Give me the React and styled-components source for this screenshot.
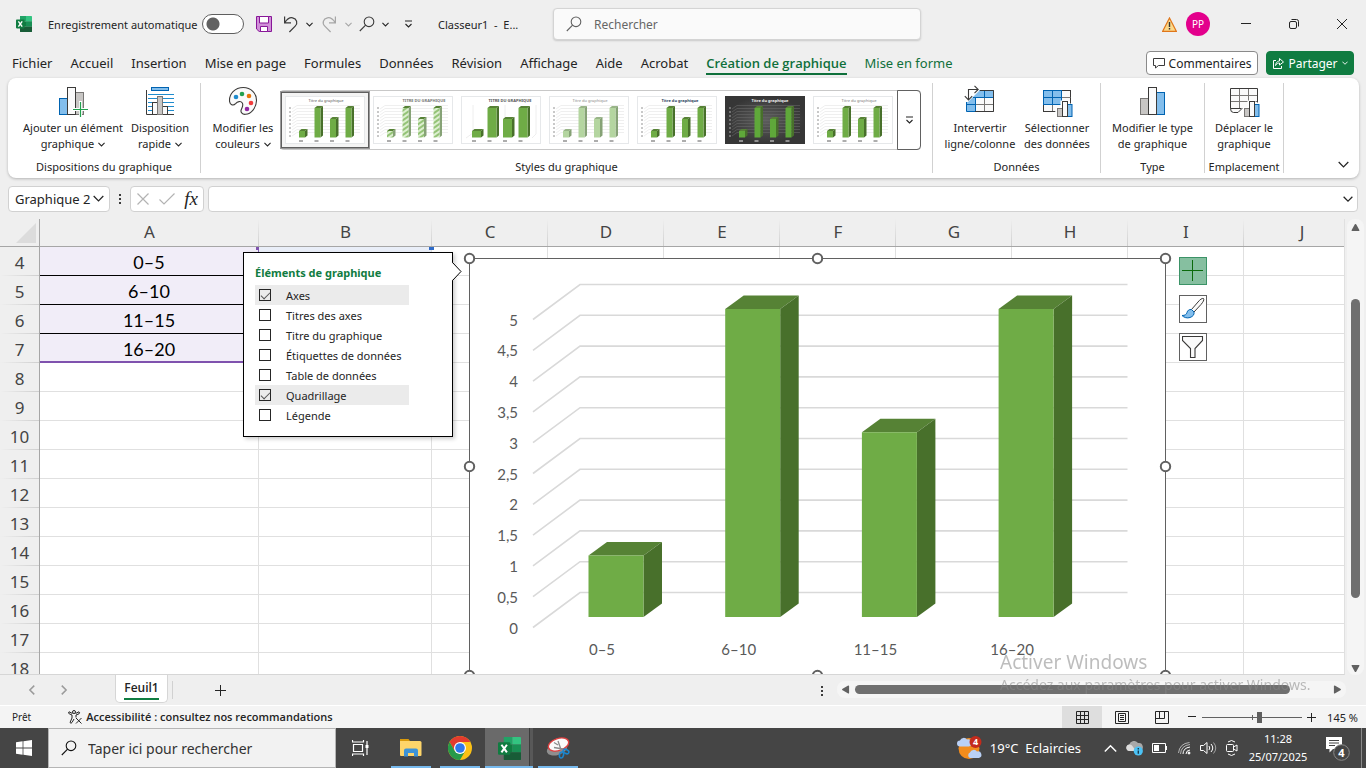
import React from "react";
import styled, { createGlobalStyle, css } from "styled-components";

const GlobalStyle = createGlobalStyle`
  *, *::before, *::after { box-sizing: border-box; }
  body { margin: 0; font-family: "Noto Sans", "Open Sans", sans-serif; font-size: 12px; color: #242424; background: #efefef; overflow: hidden; }
  button, input { font: inherit; color: inherit; margin: 0; }
  button { border: 0; background: none; padding: 0; cursor: pointer; }
  svg { display: block; flex: none; }
`;

const Window = styled.div`
  display: flex;
  flex-direction: column;
  height: 100vh;
  background: #efefef;
`;

const IconButton = styled.button`
  display: flex;
  align-items: center;
  justify-content: center;
  flex: none;
  width: ${(p) => p.$w || 24}px;
  height: 24px;
`;

/* ---------- title bar ---------- */

const TitleBar = styled.header`
  display: flex;
  align-items: center;
  height: 48px;
  flex: none;
  padding-left: 16px;
`;

const TitleLeft = styled.div`
  display: flex;
  align-items: center;
  width: 537px;
  flex: none;
  font-size: 11px;
`;

const AutoSave = styled.label`
  display: flex;
  align-items: center;
  justify-content: space-between;
  width: 196px;
  margin: 0 8px 0 16px;
  white-space: nowrap;
`;

const Toggle = styled.input`
  appearance: none;
  width: 42px;
  height: 20px;
  border: 1px solid #5f5f5f;
  border-radius: 10px;
  background: radial-gradient(circle 7px at 10px 9px, #616161 6px, #fff 7px);
`;

const DocName = styled.span`
  margin-left: 11px;
  white-space: pre;
`;

const SearchBox = styled.label`
  display: flex;
  align-items: center;
  gap: 12px;
  flex: 0 1 368px;
  height: 32px;
  padding: 0 12px;
  background: #fafafa;
  border: 1px solid #d4d4d4;
  border-radius: 4px;
  box-shadow: 0 1px 2px rgba(0, 0, 0, 0.16);
`;

const SearchInput = styled.input`
  flex: 1;
  min-width: 0;
  border: 0;
  outline: 0;
  background: none;
  padding: 0;
  font-size: ${(p) => p.$size || 12}px;
  &::placeholder { color: ${(p) => p.$color || "#666"}; opacity: 1; }
`;

const TitleRight = styled.div`
  display: flex;
  align-items: center;
  margin-left: auto;
`;

const Avatar = styled.button`
  width: 24px;
  height: 24px;
  margin: 0 12px 0 9px;
  border-radius: 50%;
  background: #e3008c;
  color: #fff;
  font-size: 10px;
`;

/* ---------- ribbon tabs ---------- */

const TabRow = styled.nav`
  display: flex;
  align-items: center;
  justify-content: space-between;
  height: 30px;
  flex: none;
  padding: 0 12px;
`;

const TabList = styled.div`
  display: flex;
  gap: 18px;
  white-space: nowrap;
  font-size: 13px;
`;

const Tab = styled.button`
  height: 24px;
  line-height: 20px;
  border-top: 2px solid transparent;
  border-bottom: 2px solid transparent;
  ${(p) => p.$green && css`color: #0f703b;`}
  ${(p) => p.$active && css`font-family: "Open Sans", sans-serif; font-weight: 600; border-bottom-color: #0f703b;`}
`;

const TabActions = styled.div`
  display: flex;
  gap: 8px;
`;

const ActionButton = styled.button`
  display: flex;
  align-items: center;
  justify-content: center;
  gap: 4px;
  width: ${(p) => (p.$primary ? 88 : 112)}px;
  height: 24px;
  border-radius: 4px;
  border: 1px solid ${(p) => (p.$primary ? "#107c41" : "#8a8a8a")};
  background: ${(p) => (p.$primary ? "#107c41" : "#fff")};
  color: ${(p) => (p.$primary ? "#fff" : "#242424")};
`;

/* ---------- ribbon ---------- */

const Ribbon = styled.section`
  display: flex;
  height: 100px;
  flex: none;
  margin: 0 7px 0 8px;
  padding: 5px 0;
  background: #fff;
  border-radius: 8px;
  box-shadow: 0 1px 3px rgba(0, 0, 0, 0.25);
  font-size: 11px;
`;

const Group = styled.div`
  display: flex;
  flex-direction: column;
  justify-content: space-between;
  width: ${(p) => p.$w}px;
  flex: none;
  border-right: 1px solid #d1d1d1;
`;

const GroupBody = styled.div`
  display: flex;
  justify-content: ${(p) => p.$justify || "center"};
  height: 74px;
  padding: 0 ${(p) => p.$pad || 0}px;
`;

const GroupLabel = styled.div`
  height: 14px;
  line-height: 16px;
  text-align: center;
  white-space: nowrap;
`;

const BigButton = styled.button`
  display: flex;
  flex-direction: column;
  align-items: center;
  width: ${(p) => p.$w}px;
  flex: none;
  padding-top: 2px;
  line-height: 16px;
  white-space: nowrap;
  svg.main { margin-bottom: 3px; }
`;

const LabelLine = styled.span`
  display: flex;
  align-items: center;
  gap: 4px;
`;

const Gallery = styled.div`
  display: flex;
  height: 60px;
  margin: 7px 0 0 3px;
  border: 1px solid #c8c8c8;
  border-right: 0;
  border-radius: 4px;
`;

const Thumb = styled.button`
  width: 88px;
  height: 56px;
  margin-top: 1px;
  display: grid;
  place-items: center;
  border: ${(p) => (p.$selected ? "1px solid #5f5f5f" : "0")};
  outline: ${(p) => (p.$selected ? "1px solid #9a9a9a" : "0")};
  background: ${(p) => (p.$selected ? "#f4f4f4" : "transparent")};
`;

const GalleryMore = styled.button`
  display: grid;
  place-items: center;
  width: 24px;
  height: 60px;
  margin: -1px 0 0 0;
  border: 1px solid #616161;
  border-radius: 0 4px 4px 0;
`;

const RibbonEnd = styled.div`
  display: flex;
  flex: 1;
  align-items: flex-end;
  justify-content: flex-end;
  padding-right: 4px;
  margin-bottom: -3px;
`;

/* ---------- formula bar ---------- */

const FormulaRow = styled.div`
  display: flex;
  align-items: center;
  height: 41px;
  flex: none;
  padding: 0 8px;
`;

const NameBox = styled.button`
  display: flex;
  align-items: center;
  justify-content: space-between;
  width: 102px;
  height: 26px;
  padding: 0 5px 0 6px;
  background: #fff;
  border: 1px solid #d1d1d1;
  border-radius: 4px;
  font-size: 13px;
  white-space: nowrap;
`;

const FormulaTools = styled.div`
  display: flex;
  align-items: center;
  width: 74px;
  height: 26px;
  background: #fff;
  border: 1px solid #d1d1d1;
  border-radius: 4px;
`;

const Fx = styled.span`
  font: italic 19px/22px "Liberation Serif", serif;
  color: #242424;
`;

const FormulaField = styled.label`
  display: flex;
  align-items: center;
  flex: 1;
  height: 26px;
  margin-left: 4px;
  padding: 0 4px;
  background: #fff;
  border: 1px solid #d1d1d1;
  border-radius: 4px;
`;

/* ---------- worksheet ---------- */

const Workspace = styled.main`
  display: flex;
  flex: 1;
  min-height: 0;
`;

const SheetArea = styled.div`
  position: relative;
  flex: 1;
  min-width: 0;
  overflow: hidden;
  border-right: 1px solid #e0e0e0;
  border-bottom: 1px solid #d6d6d6;
`;

const Grid = styled.table`
  table-layout: fixed;
  width: 1360px;
  border-spacing: 0;
  background: #fff;
`;

const ColHead = styled.th`
  height: 28px;
  padding: 0 0 2px;
  font-size: 17px;
  font-weight: 400;
  line-height: 24px;
  color: #444;
  border-bottom: 1px solid #a6a6a6;
  background: linear-gradient(#efefef, #cfcfcf) right / 1px 100% no-repeat #efefef;
`;

const Corner = styled.th`
  padding: 0;
  background: #efefef;
  border-right: 1px solid #a6a6a6;
  border-bottom: 1px solid #a6a6a6;
`;

const RowHead = styled.th`
  height: 29px;
  padding: 2px 0 0;
  font-size: 17px;
  font-weight: 400;
  line-height: 24px;
  color: #444;
  background: linear-gradient(90deg, #efefef, #cfcfcf) bottom / 100% 1px no-repeat #efefef;
  border-right: 1px solid #a6a6a6;
`;

const Cell = styled.td`
  position: relative;
  padding: 2px 0 0;
  text-align: center;
  border-right: 1px solid #e0e0e0;
  border-bottom: 1px solid #e0e0e0;
  font: 18px/24px Lato, sans-serif;
  color: #000;
  ${(p) => p.$range && css`background: #f1edf8; border-color: #000; border-right-color: #8764b8;`}
  ${(p) => p.$last && css`border-bottom: 2px solid #7f52ae;`}
  ${(p) => p.$mark && css`
    &::before {
      content: "";
      position: absolute;
      top: 0;
      right: -3px;
      width: 5px;
      height: 3px;
      background: ${p.$mark};
    }
  `}
  ${(p) => p.$series && css`background: #e9eef8;`}
`;

const ChartObject = styled.figure`
  position: absolute;
  left: 463px;
  top: 33px;
  margin: 0;
`;

const ChartTools = styled.div`
  position: absolute;
  left: 1179px;
  top: 38px;
  display: flex;
  flex-direction: column;
  gap: 10px;
`;

const ChartTool = styled.button`
  display: grid;
  place-items: center;
  width: 28px;
  height: 28px;
  border: 1px solid ${(p) => (p.$active ? "#3c9367" : "#616161")};
  background: ${(p) => (p.$active ? "#86bfa0" : "#fff")};
`;

const Popup = styled.section`
  position: absolute;
  left: 243px;
  top: 33px;
  width: 210px;
  height: 185px;
  padding: 11px 10px 0 11px;
  background: #fff;
  border: 1px solid #000;
  box-shadow: 2px 2px 4px rgba(0, 0, 0, 0.2);
  font-size: 11px;
`;

const PopupArrow = styled.svg`
  position: absolute;
  left: 208px;
  top: 9px;
`;

const PopupTitle = styled.h2`
  margin: 0 0 3px;
  font-size: 11px;
  line-height: 18px;
  font-weight: 700;
  color: #107c41;
`;

const Option = styled.label`
  display: flex;
  align-items: center;
  gap: 15px;
  width: 154px;
  height: 20px;
  padding-left: 4px;
  white-space: nowrap;
  background: ${(p) => (p.$on ? "#ebebeb" : "transparent")};
`;

const Check = styled.input`
  appearance: none;
  width: 12px;
  height: 12px;
  border: 1px solid #262626;
  background: #fff;
  display: grid;
  place-items: center;
  &:checked { background: #ebebeb; }
  &:checked::after {
    content: "";
    width: 9px;
    height: 5px;
    border-left: 1px solid #555;
    border-bottom: 1px solid #555;
    transform: translateY(-1px) rotate(-45deg);
  }
`;

const VScroll = styled.div`
  display: flex;
  flex-direction: column;
  align-items: center;
  justify-content: space-between;
  width: 17px;
  margin: 0 2px;
  padding: 4px 0 2px;
  background: #f5f5f5;
  border-radius: 8px;
`;

const VTrack = styled.div`
  flex: 1;
  width: 9px;
  padding-top: 67px;
`;

const VThumb = styled.div`
  height: 82%;
  border-radius: 5px;
  background: #6f6f6f;
`;

/* ---------- sheet tabs ---------- */

const SheetTabs = styled.div`
  display: flex;
  align-items: flex-start;
  height: 31px;
  flex: none;
  border-bottom: 1px solid #fff;
`;

const SheetNav = styled.div`
  display: flex;
  align-items: center;
  gap: 8px;
  width: 115px;
  height: 29px;
  padding-left: 20px;
`;

const SheetTab = styled.button`
  width: 53px;
  height: 28px;
  padding: 1px 8px 0;
  background: #fff;
  border: 1px solid #d6d6d6;
  border-top: 0;
  border-radius: 0 0 5px 5px;
  font: 600 12px/20px "Open Sans", sans-serif;
  span { display: block; border-bottom: 2px solid #107c41; }
`;

const AddSheet = styled.button`
  display: grid;
  place-items: center;
  width: 96px;
  height: 18px;
  margin: 6px 0 0 4px;
  border-left: 1px solid #d1d1d1;
`;

const ScrollZone = styled.div`
  display: flex;
  align-items: center;
  gap: 14px;
  width: 545px;
  height: 29px;
  margin-left: auto;
`;

const HScroll = styled.div`
  display: flex;
  align-items: center;
  gap: 5px;
  flex: 1;
  height: 17px;
  padding: 0 4px;
  margin-right: 20px;
  border-radius: 8px;
  background: #f5f5f5;
`;

const HTrack = styled.div`
  flex: 1;
`;

const HThumb = styled.div`
  width: 92%;
  height: 9px;
  border-radius: 5px;
  background: #6f6f6f;
`;

/* ---------- status bar ---------- */

const StatusBar = styled.footer`
  display: flex;
  align-items: center;
  height: 22px;
  flex: none;
  padding: 0 8px 0 12px;
  background: #f4f4f4;
  font-size: 10px;
`;

const Access = styled.button`
  display: flex;
  align-items: center;
  gap: 4px;
  margin-left: 37px;
  font: 600 11px/16px "Open Sans", sans-serif;
`;

const StatusRight = styled.div`
  display: flex;
  align-items: center;
  height: 22px;
  margin-left: auto;
`;

const ViewButton = styled.button`
  display: grid;
  place-items: center;
  width: 40px;
  height: 22px;
  background: ${(p) => (p.$active ? "#dedede" : "transparent")};
`;

const ZoomRange = styled.input`
  appearance: none;
  width: 100px;
  height: 12px;
  margin-right: 4px;
  background:
    linear-gradient(#616161, #616161) 50px 4px / 1px 5px no-repeat,
    linear-gradient(#616161, #616161) 0 6px / 100% 1px no-repeat;
  &::-webkit-slider-thumb {
    appearance: none;
    width: 5px;
    height: 11px;
    background: #5f5f5f;
  }
`;

const ZoomValue = styled.span`
  width: 42px;
  text-align: right;
  white-space: nowrap;
  font-size: 11px;
`;

/* ---------- taskbar ---------- */

const Taskbar = styled.footer`
  display: flex;
  height: 40px;
  flex: none;
  background: #454545;
  color: #fff;
`;

const StartButton = styled.button`
  display: grid;
  place-items: center;
  width: 48px;
`;

const TaskSearch = styled.label`
  display: flex;
  align-items: center;
  gap: 11px;
  width: 288px;
  padding: 0 12px;
  background: #f2f2f2;
  border: 1px solid #b5b5b5;
  color: #333;
`;

const TaskApps = styled.div`
  display: flex;
`;

const TaskApp = styled.button`
  display: grid;
  place-items: center;
  width: ${(p) => p.$w || 40}px;
  height: 40px;
  margin-left: ${(p) => p.$gap}px;
  padding-top: 2px;
  border-bottom: 2px solid ${(p) => (p.$running ? "#76b9ed" : "transparent")};
  background: ${(p) => (p.$active ? "linear-gradient(90deg, #6a6a6a 44px, #3c3c3c 44px, #3c3c3c 45px, #585858 45px)" : "transparent")};
`;

const Tray = styled.div`
  display: flex;
  align-items: center;
  margin-left: auto;
`;

const Weather = styled.button`
  display: flex;
  align-items: center;
  gap: 7px;
  margin-right: 23px;
  font-size: 13px;
  white-space: pre;
`;

const TrayIcons = styled.div`
  display: flex;
  align-items: center;
  justify-content: space-between;
  width: 134px;
`;

const Clock = styled.button`
  width: 64px;
  margin: 0 15px 0 8px;
  font-size: 11px;
  line-height: 18px;
`;

const ShowDesktop = styled.button`
  width: 5px;
  height: 40px;
  margin-left: 10px;
  border-left: 1px solid #8a8a8a;
`;

const Watermark = styled.aside`
  position: fixed;
  right: 53px;
  bottom: 72px;
  width: 313px;
  color: rgba(135, 135, 135, 0.55);
  font-size: 14px;
  line-height: 22px;
  white-space: nowrap;
  pointer-events: none;
  strong { display: block; font-size: 19px; line-height: 24px; font-weight: 400; }
`;

/* ---------- icons ---------- */

const Chevron = ({ s = 7, c = "#242424", dir = 0, w = 1.2 }) => (
  <svg width={s} height={s} viewBox="0 0 8 8" fill="none" stroke={c} strokeWidth={w}>
    <path d="M0.5 2.2 4 5.7 7.5 2.2" transform={`rotate(${dir} 4 4)`} />
  </svg>
);

const Triangle = ({ dir }) => (
  <svg width="9" height="9" viewBox="0 0 10 10" fill="#616161">
    <path d="M5 1.2 Q5.5 1 5.9 1.8 L9.4 8 Q9.5 8.8 8.8 9 L1.2 9 Q0.5 8.8 0.6 8 L4.1 1.8 Q4.5 1 5 1.2Z" transform={`rotate(${dir} 5 5)`} />
  </svg>
);

const Magnifier = ({ s = 16, c = "#3b3b3b" }) => (
  <svg width={s} height={s} viewBox="0 0 16 16" fill="none" stroke={c} strokeWidth="1.1">
    <circle cx="10" cy="5.8" r="4.8" />
    <path d="M6.6 9.2 0.8 15" />
  </svg>
);

const ExcelLogo = ({ s = 16 }) => (
  <svg width={s} height={s} viewBox="0 0 16 16">
    <path d="M4 0h6v5.3H4z" fill="#21a366" />
    <path d="M10 0h5.4q.6 0 .6.6V5.3h-6z" fill="#33c481" />
    <path d="M4 5.3h6v5.3H4z" fill="#107c41" />
    <path d="M10 5.3h6v5.3h-6z" fill="#21a366" />
    <path d="M10 10.6h6v4.8q0 .6-.6.6H4.6q-.6 0-.6-.6v-4.8z" fill="#185c37" />
    <path d="M10 5.3h6v5.3h-6z" fill="#107c41" opacity=".5" />
    <rect y="3.6" width="8.6" height="8.8" rx=".8" fill="#107c41" />
    <path d="M2.4 5.4 6.2 10.7M6.2 5.4 2.4 10.7" stroke="#fff" strokeWidth="1.4" fill="none" />
  </svg>
);

const SaveIcon = () => (
  <svg width="16" height="16" viewBox="0 0 16 16" fill="#d08fd8" stroke="#881798">
    <path d="M.5.5h15v15H3.2L.5 13z" />
    <path d="M3.5.5h9v6.5h-9zM4.5 10.5h7v5h-7z" fill="#fff" />
  </svg>
);

const UndoIcon = ({ c = "#3b3b3b", flip }) => (
  <svg width="16" height="17" viewBox="0 0 16 17" fill="none" stroke={c} strokeWidth="1.2">
    <path transform={flip ? "matrix(-1 0 0 1 16 0)" : undefined} d="M1.6 .5V6.8H8M1.8 6.6C4 3.2 6.6 1.2 9.6 1.8C13.8 2.7 15.2 7.2 12.2 10.2L6.4 16" />
  </svg>
);

const MoreIcon = () => (
  <svg width="9" height="8" viewBox="0 0 9 8" fill="none" stroke="#242424" strokeWidth="1.1">
    <path d="M1 1h7M1.5 4 4.5 7 7.5 4" />
  </svg>
);

const WarningIcon = () => (
  <svg width="15" height="15" viewBox="0 0 15 15">
    <path d="M7.5 1 14.3 14.3H.7Z" fill="#fbd98a" stroke="#e0761a" strokeWidth="1.2" />
    <path d="M7.5 5v5M7.5 11v1.6" stroke="#333" strokeWidth="1.4" />
  </svg>
);

const AddElementIcon = () => (
  <svg className="main" width="32" height="32" viewBox="0 0 32 32">
    <rect x="2.5" y="13.5" width="9" height="16" fill="#83beec" stroke="#0063b1" />
    <rect x="17.5" y="7.5" width="9" height="22" fill="#c8c6c4" stroke="#797775" />
    <rect x="10.5" y="2.5" width="8" height="27" fill="#fafafa" stroke="#3b3a39" />
    <path d="M23.5 16v16M15.5 24.500h16" stroke="#fff" strokeWidth="3" />
    <path d="M23.500 17v15M16 24.500h15" stroke="#21a04e" strokeWidth="1.2" />
  </svg>
);

const LayoutIcon = () => (
  <svg className="main" width="32" height="32" viewBox="0 0 32 32" fill="none">
    <path d="M4 9.500h26M4 13.500h26M4 17.500h26M4 21.500h26M4 25.500h26" stroke="#1e8bcd" />
    <rect x="7.500" y="2.500" width="17" height="3" fill="#83beec" stroke="#0063b1" />
    <path d="M2.500 5v24.500H30" stroke="#3b3a39" />
    <rect x="8.500" y="17.500" width="5" height="12" fill="#fafafa" stroke="#3b3a39" />
    <rect x="18.500" y="21.500" width="5" height="8" fill="#fafafa" stroke="#3b3a39" />
    <rect x="13.500" y="11.500" width="5" height="18" fill="#c8c6c4" stroke="#797775" />
  </svg>
);

const PaletteIcon = () => (
  <svg className="main" width="32" height="32" viewBox="0 0 32 32">
    <path d="M2.600 16.600C1.800 9 8 2.500 16.300 2.500 24 2.500 29.600 8.500 29.500 15.500 29.400 23 24 28.800 18.500 29.300 15 29.600 13.200 27 14.300 24.500 15.600 21.500 16.600 20.200 15.300 18 13.800 15.600 10.500 16.400 8.600 18.700 6.500 20.900 3.200 20.400 2.600 16.600Z" fill="#fafafa" stroke="#3b3a39" strokeWidth="1.1" />
    <circle cx="9" cy="12" r="2.300" fill="#1e8bcd" />
    <circle cx="15" cy="9" r="2.300" fill="#21a04e" />
    <circle cx="22" cy="11" r="2.300" fill="#e8750a" />
    <circle cx="24" cy="18" r="2.300" fill="#f13c3c" />
    <circle cx="20" cy="24" r="2.300" fill="#9328a3" />
  </svg>
);

const MiniBars = ({ x, y }) => (
  <g transform={`translate(${x} ${y})`}>
    <path d="M-1.500 6.500h5v-7h8v3h4.500V17h-18z" fill="#fff" />
    <rect x=".5" y="7.500" width="5" height="8" fill="#c8c6c4" stroke="#797775" />
    <rect x="10.500" y="3.500" width="4.500" height="12" fill="#83beec" stroke="#0063b1" />
    <rect x="5.500" y=".5" width="5" height="15" fill="#fafafa" stroke="#3b3a39" />
  </g>
);

const SwitchIcon = () => (
  <svg className="main" width="32" height="32" viewBox="0 0 32 32" fill="none">
    <rect x="2.500" y="5.500" width="27" height="21" fill="#fafafa" />
    <path d="M11 5.500h18.500V12.500H11.500V26.500H2.500V12.500z" fill="#83beec" />
    <path d="M11.500 26.500h18V12.500M11.500 19.500h18M20.500 12.500v14" stroke="#797775" />
    <path d="M2.500 17v9.500h9V12.500M15 5.500h14.500v7H9M2.500 19.500h9M20.500 5.500v7" stroke="#0063b1" />
    <path d="M11 26.500h18.500V5.500H16" stroke="#3b3a39" />
    <path d="M0 0h16v5L4 17H0z" fill="#fff" />
    <path d="M4.500 15V4.500H14M.8 11.200l3.700 3.700 3.700-3.700M10.500.8l3.700 3.700-3.700 3.700" stroke="#3b3a39" strokeWidth="1.1" />
  </svg>
);

const SelectDataIcon = () => (
  <svg className="main" width="32" height="32" viewBox="0 0 32 32" fill="none">
    <rect x="2.500" y="5.500" width="27" height="21" fill="#fafafa" stroke="#3b3a39" />
    <path d="M11.500 20v6M20.500 5v21M2 12.500h27.500M2 19.500h27.500" stroke="#797775" />
    <rect x="2.500" y="5.500" width="18" height="14" fill="#83beec" stroke="#0063b1" />
    <path d="M11.500 5.500v14M2.500 12.500h18" stroke="#0063b1" />
    <MiniBars x={16} y={16} />
  </svg>
);

const ChartTypeIcon = () => (
  <svg className="main" width="32" height="32" viewBox="0 0 32 32">
    <rect x="3.500" y="13.500" width="8" height="16" fill="#c8c6c4" stroke="#797775" />
    <rect x="19.500" y="7.500" width="8" height="22" fill="#83beec" stroke="#0063b1" />
    <rect x="11.500" y="2.500" width="8" height="27" fill="#fafafa" stroke="#3b3a39" />
  </svg>
);

const MoveChartIcon = () => (
  <svg className="main" width="32" height="32" viewBox="0 0 32 32" fill="none">
    <path d="M2.500 3.500h27v20H14.500l-4 4h-8z" fill="#fafafa" />
    <path d="M11.500 3.500v20M20.500 3.500v20M2.500 10.500h27M2.500 16.500h27" stroke="#797775" />
    <path d="M17 23.500H14l-4 4H5.500q-3 0-3-4v-20h27v14" stroke="#3b3a39" />
    <path d="M2.500 23.500h11" stroke="#3b3a39" />
    <MiniBars x={16} y={16} />
  </svg>
);

const ThumbChart = ({ title, bold, dark, light, hatch, wide, titleColor, titleX = 41 }) => {
  const front = hatch ? "url(#hatch)" : light ? "#b4d5a0" : dark ? "#5fa83a" : "#6fac46";
  const side = light || hatch ? "#86a276" : "#48702b";
  const top = light ? "#98b587" : "#568235";
  const w = wide ? 9 : 6;
  const x0 = wide ? 11 : 14;
  const line = dark ? "#666" : "#e4e4e4";
  const ink = dark ? "#ccc" : "#777";
  return (
    <svg width="80" height="48" viewBox="0 0 80 48">
      <defs>
        <pattern id="hatch" width="4" height="4" patternUnits="userSpaceOnUse" patternTransform="rotate(-35)">
          <rect width="4" height="4" fill="#dcefcf" />
          <path d="M0 1h4" stroke="#7cb45a" strokeWidth="1.500" />
        </pattern>
        <radialGradient id="night"><stop offset="0" stopColor="#5e5e5e" /><stop offset="1" stopColor="#363636" /></radialGradient>
      </defs>
      <rect x=".5" y=".5" width="79" height="47" fill={dark ? "url(#night)" : "#fff"} stroke={dark ? "#363636" : "#e6e8ea"} />
      {!wide && [9, 12, 15, 18, 21, 24, 27, 30, 33, 36].map((y) => (
        <path key={y} d={`M7 ${y + 4} 12 ${y + 0.500}H75`} fill="none" stroke={line} strokeWidth=".6" />
      ))}
      {!wide && [12, 16, 20, 24, 28, 32, 36, 40].map((y) => (
        <path key={y} d={`M4 ${y}h2`} stroke={ink} strokeWidth=".8" />
      ))}
      {wide && <path d="M5 42 12 37V9M75 9v29L71 42M44 9v28" fill="none" stroke="#eee" />}
      <text x={titleX} y="6" fontSize="4" textAnchor="middle" fontWeight={bold ? 700 : 400} fill={titleColor || "#555"}>{title}</text>
      {[35, 12, 23, 12].map((y, i) => {
        const x = x0 + i * 15.500;
        return (
          <g key={i}>
            <path d={`M${x} ${y} l2.500 -2 h${w} l-2.500 2z`} fill={top} />
            <path d={`M${x + w} ${y} l2.500 -2 V39.500 L${x + w} 41.500z`} fill={side} />
            <path d={`M${x} ${y}h${w}V41.500h-${w}z`} fill={front} />
            <path d={`M${x} 45h4`} stroke={ink} strokeWidth="1.200" />
          </g>
        );
      })}
    </svg>
  );
};

const thumbs = [
  { title: "Titre du graphique", titleColor: "#555" },
  { title: "TITRE DU GRAPHIQUE", bold: true, hatch: true, titleX: 51, titleColor: "#777" },
  { title: "TITRE DU GRAPHIQUE", bold: true, wide: true, titleX: 49 },
  { title: "Titre du graphique", light: true, titleColor: "#888" },
  { title: "Titre du graphique", bold: true, titleX: 43, titleColor: "#2f4560" },
  { title: "Titre du graphique", bold: true, dark: true, titleX: 45, titleColor: "#eee" },
  { title: "Titre du graphique", titleX: 46, titleColor: "#777" },
];

/* ---------- chart ---------- */

const ticks = ["0", "0,5", "1", "1,5", "2", "2,5", "3", "3,5", "4", "4,5", "5"];
const bars = [
  { label: "0–5", value: 1 },
  { label: "6–10", value: 5 },
  { label: "11–15", value: 3 },
  { label: "16–20", value: 5 },
];

const ChartText = styled.text`
  font: 15px Lato, sans-serif;
  fill: #595959;
`;

const Chart = () => (
  <svg width="710" height="430" viewBox="463 252 710 430" role="img" aria-label="Graphique 2">
    <rect x="469.500" y="258.500" width="696" height="417" fill="#fff" stroke="#616161" />
    {ticks.map((t, i) => {
      const y = 592.500 - i * 30.800;
      return (
        <g key={t}>
          <path d={`M533 ${y + 35} 580 ${y}H1127.500`} fill="none" stroke="#d9d9d9" strokeWidth="1.600" />
          <ChartText x="518" y={y + 41} textAnchor="end">{t}</ChartText>
        </g>
      );
    })}
    {bars.map((b, i) => {
      const x = 588.500 + i * 136.700;
      const y = 617 - b.value * 61.600;
      return (
        <g key={b.label}>
          <path d={`M${x} ${y}l18.500 -13.500h55l-18.500 13.500z`} fill="#568235" />
          <path d={`M${x + 55} ${y}l18.500 -13.500V603.500L${x + 55} 617z`} fill="#48702b" />
          <path d={`M${x} ${y}h55V617h-55z`} fill="#6fac46" />
          <ChartText x={x + 13.500} y="655" textAnchor="middle">{b.label}</ChartText>
        </g>
      );
    })}
    {[[469.500, 258.500], [817.500, 258.500], [1165.500, 258.500], [469.500, 466.500], [1165.500, 466.500], [469.500, 675.500], [817.500, 675.500], [1165.500, 675.500]].map(([x, y]) => (
      <circle key={`${x}-${y}`} cx={x} cy={y} r="4.700" fill="#fff" stroke="#616161" strokeWidth="2" />
    ))}
  </svg>
);

const columns = ["A", "B", "C", "D", "E", "F", "G", "H", "I", "J"];
const widths = [219, 173, 116, 116, 116, 116, 116, 116, 116, 116];
const rows = Array.from({ length: 15 }, (_, i) => i + 4);
const ranges = { 4: "0–5", 5: "6–10", 6: "11–15", 7: "16–20" };
const options = [
  ["Axes", true],
  ["Titres des axes", false],
  ["Titre du graphique", false],
  ["Étiquettes de données", false],
  ["Table de données", false],
  ["Quadrillage", true],
  ["Légende", false],
];
const tabs = ["Fichier", "Accueil", "Insertion", "Mise en page", "Formules", "Données", "Révision", "Affichage", "Aide", "Acrobat"];

export default function App() {
  return (
    <Window>
      <GlobalStyle />
      <TitleBar>
        <TitleLeft>
          <ExcelLogo />
          <AutoSave>Enregistrement automatique<Toggle type="checkbox" role="switch" /></AutoSave>
          <IconButton aria-label="Enregistrer"><SaveIcon /></IconButton>
          <IconButton $w={30} aria-label="Annuler"><UndoIcon /></IconButton>
          <Chevron />
          <IconButton $w={32} aria-label="Rétablir"><UndoIcon c="#a6a6a6" flip /></IconButton>
          <Chevron c="#a6a6a6" />
          <IconButton $w={30} aria-label="Aperçu"><Magnifier /></IconButton>
          <Chevron />
          <IconButton $w={38} aria-label="Personnaliser"><MoreIcon /></IconButton>
          <DocName>{"Classeur1  -  E..."}</DocName>
        </TitleLeft>
        <SearchBox>
          <Magnifier c="#616161" />
          <SearchInput placeholder="Rechercher" aria-label="Rechercher" />
        </SearchBox>
        <TitleRight>
          <WarningIcon />
          <Avatar>PP</Avatar>
          <IconButton $w={48} aria-label="Réduire">
            <svg width="10" height="10"><path d="M0 4.500h10" stroke="#242424" /></svg>
          </IconButton>
          <IconButton $w={48} aria-label="Restaurer">
            <svg width="10" height="10" fill="none" stroke="#242424"><rect x=".5" y="2.500" width="7" height="7" rx="1.500" /><path d="M2.500 .5H7.500Q9.500 .5 9.500 2.500V7.500" /></svg>
          </IconButton>
          <IconButton $w={48} aria-label="Fermer">
            <svg width="10" height="10" stroke="#242424"><path d="M0 0 10 10M10 0 0 10" /></svg>
          </IconButton>
        </TitleRight>
      </TitleBar>

      <TabRow>
        <TabList>
          {tabs.map((t) => <Tab key={t}>{t}</Tab>)}
          <Tab $green $active>Création de graphique</Tab>
          <Tab $green>Mise en forme</Tab>
        </TabList>
        <TabActions>
          <ActionButton>
            <svg width="12" height="12" viewBox="0 0 12 12" fill="none" stroke="#3b3b3b"><path d="M.5 1.500h11v7H5.500L2.500 11V8.500H.5z" /></svg>
            Commentaires
          </ActionButton>
          <ActionButton $primary>
            <svg width="12" height="12" viewBox="0 0 12 12" fill="none" stroke="#fff"><path d="M4 3.500H1.500v8h8V9M3.500 8.500C4 5 6 4 7.500 4V1.500L11.500 5 7.500 8V6C6 6 4.500 6.500 3.500 8.500z" /></svg>
            Partager
            <Chevron c="#fff" s={6} />
          </ActionButton>
        </TabActions>
      </TabRow>

      <Ribbon>
        <Group $w={193}>
          <GroupBody $justify="flex-start" $pad={12}>
            <BigButton $w={106}>
              <AddElementIcon />
              <span>Ajouter un élément</span>
              <LabelLine>graphique <Chevron /></LabelLine>
            </BigButton>
            <BigButton $w={68}>
              <LayoutIcon />
              <span>Disposition</span>
              <LabelLine>rapide <Chevron /></LabelLine>
            </BigButton>
          </GroupBody>
          <GroupLabel>Dispositions du graphique</GroupLabel>
        </Group>
        <Group $w={732}>
          <GroupBody $justify="flex-start" $pad={8}>
            <BigButton $w={68}>
              <PaletteIcon />
              <span>Modifier les</span>
              <LabelLine>couleurs <Chevron /></LabelLine>
            </BigButton>
            <Gallery>
              {thumbs.map((t, i) => (
                <Thumb key={i} $selected={i === 0} aria-label={`Style ${i + 1}`}><ThumbChart {...t} /></Thumb>
              ))}
              <GalleryMore aria-label="Autres styles"><MoreIcon /></GalleryMore>
            </Gallery>
          </GroupBody>
          <GroupLabel>Styles du graphique</GroupLabel>
        </Group>
        <Group $w={168}>
          <GroupBody $justify="flex-start" $pad={8}>
            <BigButton $w={78}>
              <SwitchIcon />
              <span>Intervertir</span>
              <span>ligne/colonne</span>
            </BigButton>
            <BigButton $w={76}>
              <SelectDataIcon />
              <span>Sélectionner</span>
              <span>des données</span>
            </BigButton>
          </GroupBody>
          <GroupLabel>Données</GroupLabel>
        </Group>
        <Group $w={104}>
          <GroupBody>
            <BigButton $w={90}>
              <ChartTypeIcon />
              <span>Modifier le type</span>
              <span>de graphique</span>
            </BigButton>
          </GroupBody>
          <GroupLabel>Type</GroupLabel>
        </Group>
        <Group $w={79}>
          <GroupBody>
            <BigButton $w={68}>
              <MoveChartIcon />
              <span>Déplacer le</span>
              <span>graphique</span>
            </BigButton>
          </GroupBody>
          <GroupLabel>Emplacement</GroupLabel>
        </Group>
        <RibbonEnd>
          <IconButton aria-label="Options du ruban"><Chevron s={11} w={0.900} /></IconButton>
        </RibbonEnd>
      </Ribbon>

      <FormulaRow>
        <NameBox>Graphique 2<Chevron s={11} w={0.900} /></NameBox>
        <IconButton $w={20} aria-label="Redimensionner">
          <svg width="2" height="12" fill="#3b3b3b"><path d="M0 1h2v2H0zM0 5h2v2H0zM0 9h2v2H0z" /></svg>
        </IconButton>
        <FormulaTools>
          <IconButton aria-label="Annuler la saisie">
            <svg width="12" height="12" stroke="#b3b3b3" strokeWidth="1.200"><path d="M.5 .5 11.500 11.500M11.500 .5 .5 11.500" /></svg>
          </IconButton>
          <IconButton aria-label="Valider">
            <svg width="16" height="12" fill="none" stroke="#b3b3b3" strokeWidth="1.200"><path d="M.5 6.500 5 11 15.500 .5" /></svg>
          </IconButton>
          <IconButton aria-label="Insérer une fonction"><Fx>fx</Fx></IconButton>
        </FormulaTools>
        <FormulaField>
          <SearchInput aria-label="Barre de formule" />
          <Chevron s={10} w={1} />
        </FormulaField>
      </FormulaRow>

      <Workspace>
        <SheetArea>
          <Grid>
            <colgroup>
              <col style={{ width: 40 }} />
              {widths.map((w, i) => <col key={i} style={{ width: w }} />)}
            </colgroup>
            <thead>
              <tr>
                <Corner aria-label="Tout sélectionner">
                  <svg width="39" height="27"><path d="M36 4V24H16z" fill="#dcdcdc" /></svg>
                </Corner>
                {columns.map((c) => <ColHead key={c} scope="col">{c}</ColHead>)}
              </tr>
            </thead>
            <tbody>
              {rows.map((r) => (
                <tr key={r}>
                  <RowHead scope="row">{r}</RowHead>
                  {columns.map((c) => (
                    <Cell
                      key={c}
                      $range={c === "A" && r < 8}
                      $last={c === "A" && r === 7}
                      $series={c === "B" && r === 4}
                      $mark={r === 4 ? { A: "#7f52ae", B: "#2f6bc8" }[c] : undefined}
                    >
                      {c === "A" ? ranges[r] : null}
                    </Cell>
                  ))}
                </tr>
              ))}
            </tbody>
          </Grid>
          <ChartObject><Chart /></ChartObject>
          <ChartTools>
            <ChartTool $active aria-label="Éléments de graphique">
              <svg width="22" height="22" stroke="#0b6a0b"><path d="M10.500 0v21M0 10.500h21" /></svg>
            </ChartTool>
            <ChartTool aria-label="Styles du graphique">
              <svg width="24" height="24" viewBox="0 0 24 24" fill="none">
                <path d="M22.500 1.500C21 1 19 2.500 17 5L10.500 12.500 13 15 20 7.500C22 5 23.500 3 22.500 1.500Z" fill="#fafafa" stroke="#3b3a39" />
                <path d="M13 15 10.500 12.500C8 12.200 6.500 13.500 6 15.500 5.500 17.500 4 18.500 1 18.500 3 20.500 6 21.500 9 20.500 12 19.500 13.500 17.500 13 15Z" fill="#83beec" stroke="#0063b1" />
              </svg>
            </ChartTool>
            <ChartTool aria-label="Filtres du graphique">
              <svg width="22" height="24" viewBox="0 0 22 24" fill="#fafafa" stroke="#3b3a39" strokeWidth="1.100"><path d="M.5 1.500h20v4L13 13.500v9H8.500v-9L.5 5.500z" /></svg>
            </ChartTool>
          </ChartTools>
          <Popup>
            <PopupArrow width="10" height="20" fill="#fff" stroke="#000"><path d="M0 .5 9 9.500 0 18.500" stroke="none" /><path d="M.5 .5 9 9.500 .5 18.500" /></PopupArrow>
            <PopupTitle>Éléments de graphique</PopupTitle>
            {options.map(([name, on]) => (
              <Option key={name} $on={on}><Check type="checkbox" defaultChecked={on} />{name}</Option>
            ))}
          </Popup>
        </SheetArea>
        <VScroll>
          <Triangle dir={0} />
          <VTrack><VThumb /></VTrack>
          <Triangle dir={180} />
        </VScroll>
      </Workspace>

      <SheetTabs>
        <SheetNav>
          <IconButton aria-label="Feuille précédente"><Chevron s={10} dir={90} c="#9a9a9a" /></IconButton>
          <IconButton aria-label="Feuille suivante"><Chevron s={10} dir={-90} c="#9a9a9a" /></IconButton>
        </SheetNav>
        <SheetTab><span>Feuil1</span></SheetTab>
        <AddSheet aria-label="Nouvelle feuille">
          <svg width="11" height="11" stroke="#242424"><path d="M5.500 0v11M0 5.500h11" /></svg>
        </AddSheet>
        <ScrollZone>
          <svg width="2" height="12" fill="#3b3b3b"><path d="M0 2h2v2H0zM0 6h2v2H0zM0 10h2v2H0z" /></svg>
          <HScroll>
            <Triangle dir={-90} />
            <HTrack><HThumb /></HTrack>
            <Triangle dir={90} />
          </HScroll>
        </ScrollZone>
      </SheetTabs>

      <StatusBar>
        <span>Prêt</span>
        <Access>
          <svg width="14" height="14" viewBox="0 0 14 14" fill="none" stroke="#242424">
            <circle cx="6" cy="2" r="1.500" />
            <path d="M4.500 3.500 1 1.800Q-.2 3 1.200 3.800L4 5V8L2 12.500Q3 14 4 12.500L6 9M7.500 3.500 11 1.800Q12.300 3 11 3.800L8 5V7.500M8 8l5.500 5.500M13.500 8 8 13.500" />
          </svg>
          Accessibilité : consultez nos recommandations
        </Access>
        <StatusRight>
          <ViewButton $active aria-label="Normal">
            <svg width="13" height="13" fill="none" stroke="#242424"><path d="M.5 .5h12v12H.5zM4.500 .5v12M8.500 .5v12M.5 4.500h12M.5 8.500h12" /></svg>
          </ViewButton>
          <ViewButton aria-label="Mise en page">
            <svg width="14" height="13" fill="none" stroke="#242424"><path d="M.5 .5h13v12H.5zM3.500 2.500h7v8h-7zM5 4.500h4M5 6.500h4M5 8.500h4" /></svg>
          </ViewButton>
          <ViewButton aria-label="Avec sauts de page">
            <svg width="14" height="13" fill="none" stroke="#242424"><path d="M.5 .5h13v12H.5zM4.500 .5v7M9.500 .5v7M.5 7.500h9" /></svg>
          </ViewButton>
          <IconButton $w={20} aria-label="Zoom arrière"><svg width="8" height="8" stroke="#242424"><path d="M0 3.500h8" /></svg></IconButton>
          <ZoomRange type="range" min="0" max="100" defaultValue="58" aria-label="Zoom" />
          <IconButton $w={10} aria-label="Zoom avant"><svg width="9" height="9" stroke="#242424"><path d="M0 4.500h9M4.500 0v9" /></svg></IconButton>
          <ZoomValue>145 %</ZoomValue>
        </StatusRight>
      </StatusBar>

      <Taskbar>
        <StartButton aria-label="Démarrer">
          <svg width="16" height="16" viewBox="0 0 16 16" fill="#fff"><path d="M0 2.200 6.600 1.300V7.600H0zM7.400 1.200 16 0V7.600H7.400zM0 8.400H6.600V14.700L0 13.800zM7.400 8.400H16V16L7.400 14.800z" /></svg>
        </StartButton>
        <TaskSearch>
          <Magnifier c="#111" />
          <SearchInput $size={14} $color="#333" placeholder="Taper ici pour rechercher" aria-label="Taper ici pour rechercher" />
        </TaskSearch>
        <TaskApps>
          <TaskApp $gap={4} aria-label="Affichage des tâches">
            <svg width="17" height="16" fill="none" stroke="#fff" strokeWidth="1.200"><path d="M1.500 4.500h9v7h-9zM.5 0v2h11V0M.5 16v-2h11v2M15 1v14" /><path d="M13.500 5h3v3h-3z" fill="#fff" stroke="none" /></svg>
          </TaskApp>
          <TaskApp $gap={11} $running aria-label="Explorateur de fichiers">
            <svg width="22" height="20" viewBox="0 0 22 20"><path d="M0 1h8.500l1.500 2H0z" fill="#d99a0b" /><path d="M0 3h20q1.500 0 1.500 1.500V17q0 1-1 1H1q-1 0-1-1z" fill="#fed56a" /><path d="M4 18.500v-6q0-2 2-2h10q2 0 2 2v6h-4V15H8v3.500z" fill="#3e93d6" /></svg>
          </TaskApp>
          <TaskApp $gap={9} $running aria-label="Chrome">
            <svg width="24" height="24" viewBox="0 0 24 24">
              <circle cx="12" cy="12" r="12" fill="#fbc116" />
              <path d="M12 0A12 12 0 0 1 22.400 6H12L6.800 15 1.600 6A12 12 0 0 1 12 0z" fill="#e33b2e" />
              <path d="M1.600 6 6.800 15 12 18 17.200 15 12 24A12 12 0 0 1 1.600 6z" fill="#279a4a" />
              <circle cx="12" cy="12" r="6" fill="#fff" /><circle cx="12" cy="12" r="4.800" fill="#2f78ec" />
            </svg>
          </TaskApp>
          <TaskApp $gap={5} $w={48} $running $active aria-label="Excel"><ExcelLogo s={23} /></TaskApp>
          <TaskApp $gap={5} $running aria-label="Outil Capture">
            <svg width="24" height="22" viewBox="0 0 24 22" fill="none">
              <ellipse cx="11" cy="12" rx="10.500" ry="6" transform="rotate(-18 11 12)" fill="#8f8f8f" />
              <ellipse cx="12.500" cy="7.500" rx="10.500" ry="6" transform="rotate(-18 12.500 7.500)" fill="#fafafa" stroke="#e04040" strokeWidth="1.400" />
              <path d="M12 4 15.500 14M8 10.500 17 12M8 5.500 12 8" stroke="#8b8b8b" strokeWidth="1.300" />
              <ellipse cx="20" cy="14.500" rx="3" ry="2" transform="rotate(25 20 14.500)" stroke="#1a86cf" strokeWidth="1.600" />
              <ellipse cx="15.500" cy="18" rx="2" ry="3" transform="rotate(15 15.500 18)" stroke="#1a86cf" strokeWidth="1.600" />
            </svg>
          </TaskApp>
        </TaskApps>
        <Tray>
          <Weather>
            <svg width="26" height="24" viewBox="0 0 26 24">
              <circle cx="12" cy="12.500" r="10.500" fill="#f28c1c" />
              <path d="M3 10.500a3 3 0 0 1 0-6 4 4 0 0 1 7-1 3.500 3.500 0 0 1 2 7z" fill="#b9d0f5" />
              <path d="M13 22a3 3 0 0 1 0-5.500 4 4 0 0 1 7-1 3.300 3.300 0 0 1 2 6.500z" fill="#b9d0f5" />
              <circle cx="18.500" cy="6" r="6" fill="#c42b1c" />
              <text x="18.500" y="9.300" fontSize="9" fontWeight="700" fill="#fff" textAnchor="middle">4</text>
            </svg>
            {"19°C  Eclaircies"}
          </Weather>
          <TrayIcons>
            <Chevron s={13} dir={180} c="#fff" w={0.900} />
            <svg width="17" height="15" viewBox="0 0 17 15"><path d="M3.500 10a3.300 3.300 0 0 1-.3-6.500A5 5 0 0 1 12 2a4 4 0 0 1 1.500 8z" fill="#a8a8a8" /><path d="M3.500 10a3.300 3.300 0 1 1 2.500-5.500L10 10z" fill="#dcdcdc" /><circle cx="12.300" cy="10" r="4.600" fill="#4cc2f5" /><path d="M12.300 9.500v3.200M12.300 7v1.500" stroke="#173a4d" strokeWidth="1.400" /></svg>
            <svg width="16" height="10" fill="none" stroke="#fff"><path d="M.5 .5h13v9H.5zM14.500 3v4" /><path d="M2 2h5v6H2z" fill="#fff" stroke="none" /></svg>
            <svg width="13" height="13" viewBox="0 0 13 13" fill="none" stroke="#fff"><circle cx="11" cy="11" r="1" fill="#fff" /><path d="M8 12Q8 8.500 12 8M5 12Q5 6 12 5" /><path d="M2.500 12Q3 3.500 12 2.500M.5 11Q1.500 1.500 11.500 .5" opacity=".6" /></svg>
            <svg width="17" height="14" viewBox="0 0 17 14" fill="none" stroke="#fff"><path d="M.5 4.500h3L7 1.500v11L3.500 9.500h-3zM9 5q1.500 2 0 4M11 3q3.500 4 0 8" /><path d="M13.500 1.500q4.500 5.500 0 11" opacity=".5" /></svg>
            <svg width="12" height="16" viewBox="0 0 12 16" fill="none" stroke="#fff"><rect x=".5" y="4.500" width="7" height="7" rx="1" /><path d="M7.500 7 11 5v6L7.500 9M2 2q3.500-3 7 0M2 14q3.500 3 7 0" /></svg>
          </TrayIcons>
          <Clock>11:28<br />25/07/2025</Clock>
          <svg width="26" height="26" viewBox="0 0 26 26">
            <path d="M1 2h16v12H8l-3.500 3.500V14H1z" fill="#fff" />
            <path d="M4 5.500h10M4 8h10M4 10.500h6" stroke="#454545" />
            <circle cx="16.500" cy="17.500" r="7.800" fill="#454545" stroke="#8a8a8a" />
            <text x="16.500" y="21.500" fontSize="11" fontWeight="700" fill="#fff" textAnchor="middle">4</text>
          </svg>
          <ShowDesktop aria-label="Afficher le bureau" />
        </Tray>
      </Taskbar>
      <Watermark><strong>Activer Windows</strong>Accédez aux paramètres pour activer Windows.</Watermark>
    </Window>
  );
}
